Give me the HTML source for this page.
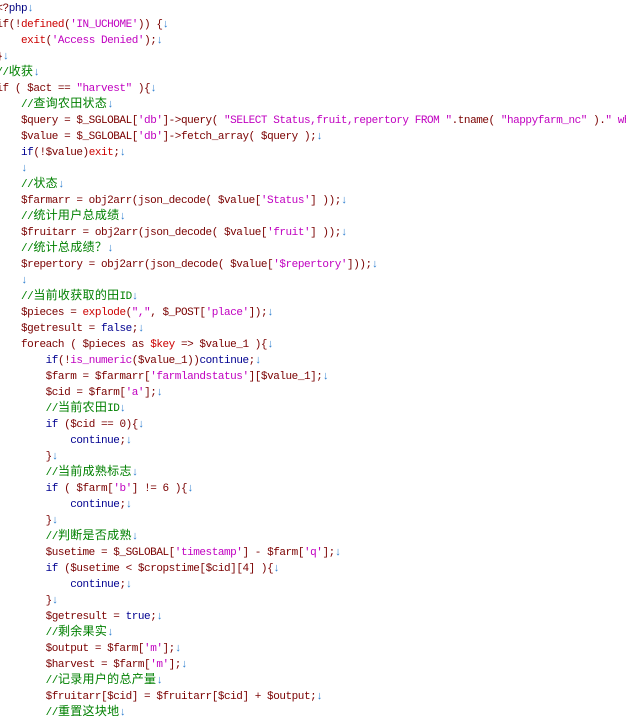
<!DOCTYPE html>
<html><head><meta charset="utf-8"><style>
html,body{margin:0;padding:0;background:#fff;width:626px;height:719px;overflow:hidden}
#w{position:absolute;left:-3.6px;top:1px;font-family:"Liberation Mono","DejaVu Sans Mono",monospace;font-size:11px;letter-spacing:-0.45px;color:#7a0000}
#w div{height:16px;line-height:16px;white-space:pre;overflow:visible}
.s{color:#c000c0}.c{color:#008000}.k{color:#000090}.f{color:#cc0000}.a{color:#2f7fd0}.p{color:#000080}
.z{font-family:"Noto Sans CJK SC","WenQuanYi Zen Hei",sans-serif;font-size:12px;letter-spacing:0.3px;line-height:10px}
</style></head><body><div id="w">
<div>&lt;?<span class="p">php</span><span class="a">↓</span></div>
<div>if(!<span class="f">defined</span>(<span class="s">'IN_UCHOME'</span>)) {<span class="a">↓</span></div>
<div>    <span class="f">exit</span>(<span class="s">'Access Denied'</span>);<span class="a">↓</span></div>
<div>}<span class="a">↓</span></div>
<div><span class="c">//<span class="z">收获</span></span><span class="a">↓</span></div>
<div>if ( $act == <span class="s">"harvest"</span> ){<span class="a">↓</span></div>
<div>    <span class="c">//<span class="z">查询农田状态</span></span><span class="a">↓</span></div>
<div>    $query = $_SGLOBAL[<span class="s">'db'</span>]-&gt;query( <span class="s">"SELECT Status,fruit,repertory FROM "</span>.tname( <span class="s">"happyfarm_nc"</span> ).<span class="s">" where</span></div>
<div>    $value = $_SGLOBAL[<span class="s">'db'</span>]-&gt;fetch_array( $query );<span class="a">↓</span></div>
<div>    <span class="k">if</span>(!$value)<span class="f">exit</span>;<span class="a">↓</span></div>
<div>    <span class="a">↓</span></div>
<div>    <span class="c">//<span class="z">状态</span></span><span class="a">↓</span></div>
<div>    $farmarr = obj2arr(json_decode( $value[<span class="s">'Status'</span>] ));<span class="a">↓</span></div>
<div>    <span class="c">//<span class="z">统计用户总成绩</span></span><span class="a">↓</span></div>
<div>    $fruitarr = obj2arr(json_decode( $value[<span class="s">'fruit'</span>] ));<span class="a">↓</span></div>
<div>    <span class="c">//<span class="z">统计总成绩？</span></span><span class="a">↓</span></div>
<div>    $repertory = obj2arr(json_decode( $value[<span class="s">'$repertory'</span>]));<span class="a">↓</span></div>
<div>    <span class="a">↓</span></div>
<div>    <span class="c">//<span class="z">当前收获取的田</span>ID</span><span class="a">↓</span></div>
<div>    $pieces = <span class="f">explode</span>(<span class="s">","</span>, $_POST[<span class="s">'place'</span>]);<span class="a">↓</span></div>
<div>    $getresult = <span class="k">false</span>;<span class="a">↓</span></div>
<div>    foreach ( $pieces as <span class="f">$key</span> =&gt; $value_1 ){<span class="a">↓</span></div>
<div>        <span class="k">if</span>(!<span class="s">is_numeric</span>($value_1))<span class="k">continue</span>;<span class="a">↓</span></div>
<div>        $farm = $farmarr[<span class="s">'farmlandstatus'</span>][$value_1];<span class="a">↓</span></div>
<div>        $cid = $farm[<span class="s">'a'</span>];<span class="a">↓</span></div>
<div>        <span class="c">//<span class="z">当前农田</span>ID</span><span class="a">↓</span></div>
<div>        <span class="k">if</span> ($cid == 0){<span class="a">↓</span></div>
<div>            <span class="k">continue</span>;<span class="a">↓</span></div>
<div>        }<span class="a">↓</span></div>
<div>        <span class="c">//<span class="z">当前成熟标志</span></span><span class="a">↓</span></div>
<div>        <span class="k">if</span> ( $farm[<span class="s">'b'</span>] != 6 ){<span class="a">↓</span></div>
<div>            <span class="k">continue</span>;<span class="a">↓</span></div>
<div>        }<span class="a">↓</span></div>
<div>        <span class="c">//<span class="z">判断是否成熟</span></span><span class="a">↓</span></div>
<div>        $usetime = $_SGLOBAL[<span class="s">'timestamp'</span>] - $farm[<span class="s">'q'</span>];<span class="a">↓</span></div>
<div>        <span class="k">if</span> ($usetime &lt; $cropstime[$cid][4] ){<span class="a">↓</span></div>
<div>            <span class="k">continue</span>;<span class="a">↓</span></div>
<div>        }<span class="a">↓</span></div>
<div>        $getresult = <span class="k">true</span>;<span class="a">↓</span></div>
<div>        <span class="c">//<span class="z">剩余果实</span></span><span class="a">↓</span></div>
<div>        $output = $farm[<span class="s">'m'</span>];<span class="a">↓</span></div>
<div>        $harvest = $farm[<span class="s">'m'</span>];<span class="a">↓</span></div>
<div>        <span class="c">//<span class="z">记录用户的总产量</span></span><span class="a">↓</span></div>
<div>        $fruitarr[$cid] = $fruitarr[$cid] + $output;<span class="a">↓</span></div>
<div>        <span class="c">//<span class="z">重置这块地</span></span><span class="a">↓</span></div>
</div></body></html>
